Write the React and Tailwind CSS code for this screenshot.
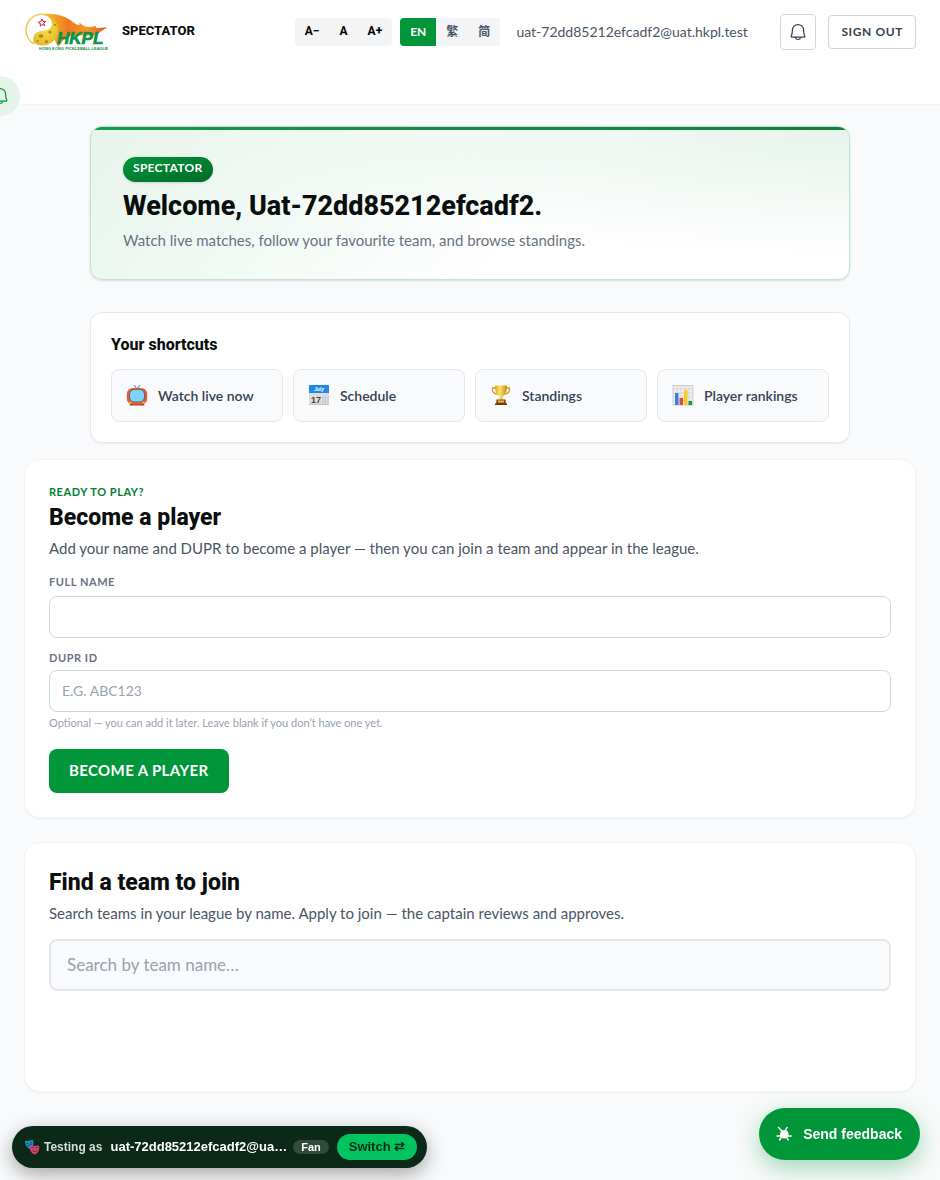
import React, { useState } from "react";
import { PiBell } from "react-icons/pi";

const email = "uat-72dd85212efcadf2@uat.hkpl.test";

const heading = "font-['Roboto',sans-serif] font-extrabold text-[#0a0f0d]";
const card = "rounded-2xl border border-gray-100 bg-white p-6 shadow-xs";
const label = "text-[11px] leading-4 font-bold tracking-wider text-gray-500";
const field = "h-[42px] w-full rounded-lg border border-gray-300 bg-white px-3 pb-0.5 text-sm text-gray-900 placeholder:text-gray-400";

function Logo() {
    return (
        <svg viewBox="-1 0 84 38" className="h-[38px] w-[84px]" role="img" aria-label="HKPL">
            <defs>
                <linearGradient id="flame" x1="0" x2="1">
                    <stop offset="0" stopColor="#f9c828" />
                    <stop offset="0.4" stopColor="#ee7a22" />
                    <stop offset="0.7" stopColor="#f39a2c" />
                    <stop offset="1" stopColor="#e4501e" />
                </linearGradient>
                <radialGradient id="ball" cx="0.6" cy="0.5">
                    <stop offset="0" stopColor="#f3dc45" />
                    <stop offset="1" stopColor="#e3bb2c" />
                </radialGradient>
            </defs>
            <path d="M17 1C32 0 40 3 48 9c2 2 4 3 7 3-1-1-1-2 0-2 3 3 6 4 10 4 3 0 4-1 6-1-1 1 0 2 2 2 3 0 6-1 9 0-4 1-7 5-12 7-8 2-15-1-24 1-6 1-9 6-13 11z" fill="url(#flame)" />
            <circle cx="17.500" cy="17" r="15.500" fill="url(#ball)" />
            <path d="M17 2c6 0 10 4 10 9 0 4-4 6-9 7-5 0-8 2-9 5-1 3-1 5 0 8C4 28 2 23 2 17 2 8 9 2 17 2z" fill="#fff" />
            <path d="M17 1C8 1 1 8 1 17c0 6 3 11 8 14" fill="none" stroke="#edbd3b" strokeWidth="1.200" />
            <path d="M17 6l1 2.500 2.700-.1-2 1.800 1 2.500-2.500-1.200-2 1.800.2-2.700-2.300-1.300 2.700-.5z" fill="#fff" stroke="#c8203c" strokeWidth="1" />
            <g fill="#ad8420">
                <ellipse cx="16" cy="23" rx="2.300" ry="1.700" />
                <circle cx="25" cy="19" r="1.600" />
                <circle cx="21.500" cy="28.500" r="1.600" />
                <circle cx="30" cy="12" r="1.100" />
                <circle cx="12.500" cy="28" r="1.100" />
            </g>
            <text x="32" y="31" fontSize="17" fontWeight="700" fontStyle="italic" fontFamily="Liberation Sans, sans-serif" fill="#0c9444" stroke="#0c9444" strokeWidth="0.700">HKPL</text>
            <text x="14" y="37" fontSize="4" fontWeight="700" fontFamily="Liberation Sans, sans-serif" fill="#0c9444">HONG KONG PICKLEBALL LEAGUE</text>
        </svg>
    );
}

function TvIcon() {
    return (
        <svg viewBox="0 0 22 22" className="h-[22px] w-[22px]" aria-hidden="true">
            <path d="M8 0l3 4 3-4" fill="none" stroke="#7297a8" strokeWidth="1.200" />
            <path d="M4 18h14l.5 2.500h-15z" fill="#b23a1c" />
            <rect x="0.800" y="3" width="20.400" height="16.500" rx="6" fill="#f0592b" />
            <rect x="3" y="4.200" width="16" height="13" rx="5" fill="#4b7180" />
            <rect x="4" y="5" width="14" height="11.500" rx="4.500" fill="#7fd3fa" />
            <circle cx="4.500" cy="17.500" r="0.900" fill="#ffc93d" />
            <circle cx="17.500" cy="17.500" r="0.900" fill="#ffc93d" />
        </svg>
    );
}

function CalendarIcon() {
    return (
        <svg viewBox="0 0 22 22" className="h-[22px] w-[22px]" aria-hidden="true">
            <rect x="1" y="0" width="20" height="20" rx="1" fill="#dedede" />
            <path d="M1 1a1 1 0 0 1 1-1h18a1 1 0 0 1 1 1v7H1z" fill="#1e88e5" />
            <path d="M15 11v8M17.500 11v8M20 11v8M1 19.500h20" stroke="#bdbdbd" strokeWidth="0.800" />
            <text x="11" y="6" textAnchor="middle" fontSize="5" fontWeight="700" fontStyle="italic" fontFamily="Liberation Sans, sans-serif" fill="#fff">July</text>
            <text x="8" y="18" textAnchor="middle" fontSize="9" fontWeight="700" fontFamily="Liberation Sans, sans-serif" fill="#424242">17</text>
        </svg>
    );
}

function TrophyIcon() {
    return (
        <svg viewBox="0 0 22 22" className="h-[22px] w-[22px]" aria-hidden="true">
            <defs>
                <linearGradient id="gold" x1="0" x2="1">
                    <stop offset="0" stopColor="#e0a81d" />
                    <stop offset="0.4" stopColor="#fbe46a" />
                    <stop offset="1" stopColor="#c98a10" />
                </linearGradient>
            </defs>
            <path d="M6 3H2.500C2 7 4 9 8 9M15 3h4.500C20 7 18 9 14 9" fill="none" stroke="#cf9a20" strokeWidth="1.300" />
            <path d="M5 .5h12c0 6-1 9-4.500 11L13 15H9l.5-3.500C6 9.500 5 6.500 5 .5z" fill="url(#gold)" />
            <path d="M6.500 14.500h9L16 19H6z" fill="#8b4a10" />
            <rect x="8" y="15.500" width="6" height="2" fill="#e8b93a" />
            <path d="M5 18.500h12V20H5z" fill="#6d2f0c" />
        </svg>
    );
}

function ChartIcon() {
    return (
        <svg viewBox="0 0 22 22" className="h-[22px] w-[22px]" aria-hidden="true">
            <rect x="1" y="0.500" width="20" height="19.500" fill="#eeeeee" stroke="#bdbdbd" strokeWidth="0.700" />
            <path d="M1 4h20M1 8h20M1 12h20M1 16h20M5 0v20M9 0v20M13 0v20M17 0v20" stroke="#cfcfcf" strokeWidth="0.600" />
            <rect x="3" y="8" width="3.500" height="12" fill="#3f7be0" />
            <rect x="7.500" y="13" width="3.500" height="7" fill="#e8453c" />
            <rect x="12" y="5" width="3.500" height="15" fill="#f6cb2b" />
            <rect x="16.500" y="16" width="3.500" height="4" fill="#1e8e4a" />
        </svg>
    );
}

function MasksIcon() {
    return (
        <svg viewBox="0 0 16 16" className="h-4 w-4 shrink-0" aria-hidden="true">
            <path d="M1 2c3 0 5-.5 8-1 1 4 0 8-3 9C3 9 1 6 1 2z" fill="#1a8fc4" />
            <path d="M2.500 4.500l2-.3M6 4l2-.5M3.500 7c1.500-1 3-1 4-1.500" stroke="#0b3b56" strokeWidth="0.900" fill="none" />
            <path d="M6 6c3 1 6 1 9 .5 1 4-1 8-4 9-4-1-6-5-5-9.500z" fill="#c9476f" />
            <path d="M7.500 8.500l2 .3M11.500 9l2-.3M8.500 11.500c1.500 1.500 3 1.500 4.500 0" stroke="#6b1734" strokeWidth="0.900" fill="none" />
        </svg>
    );
}

function FeedbackIcon() {
    return (
        <svg viewBox="0 0 16 16" className="h-4 w-4" fill="white" stroke="white" strokeWidth="1.500" strokeLinecap="round" aria-hidden="true">
            <circle cx="8.300" cy="8.300" r="4.300" stroke="none" />
            <path d="M7 6 2.500 1.500M8.500 6l2.500-4.500M1 10h14.200M5.500 11 3.500 14M10.500 11l1.700 3" fill="none" />
        </svg>
    );
}

const shortcuts = [
    { Icon: TvIcon, label: "Watch live now", href: "#live" },
    { Icon: CalendarIcon, label: "Schedule", href: "#schedule" },
    { Icon: TrophyIcon, label: "Standings", href: "#standings" },
    { Icon: ChartIcon, label: "Player rankings", href: "#rankings" },
];

function Header() {
    const [lang, setLang] = useState("EN");

    return (
        <header className="h-[105px] border-b border-gray-100 bg-white px-6">
            <div className="flex h-16 items-center">
                <a href="#home" className="flex items-center gap-3.5">
                    <Logo />
                    <span className={`${heading} pb-0.5 text-[13px] leading-4`}>SPECTATOR</span>
                </a>

                {/* Text size */}
                <div className="ml-auto flex h-7 items-center rounded bg-gray-100 pb-0.5 font-['Roboto',sans-serif] text-xs font-bold text-black">
                    <button className="px-2.5">A−</button>
                    <button className="px-2.5">A</button>
                    <button className="px-2.5">A+</button>
                </div>

                {/* Language */}
                <div className="ml-2 flex h-7 overflow-hidden rounded bg-gray-100 text-xs font-bold">
                    {["EN", "繁", "简"].map((l) => (
                        <button
                            key={l}
                            onClick={() => setLang(l)}
                            className={l === lang ? "bg-[#009639] px-2.5 text-white" : "px-2.5 text-gray-600"}
                        >
                            {l}
                        </button>
                    ))}
                </div>

                <span className="ml-4 min-w-60 text-sm text-gray-600">{email}</span>
                <button aria-label="Notifications" className="ml-6 flex h-9 w-9 items-center justify-center rounded border border-gray-300 text-gray-700">
                    <PiBell className="h-5 w-5" />
                </button>
                <button className="ml-3 h-[34px] rounded border border-gray-300 px-3 text-xs font-bold tracking-wider text-gray-700">
                    SIGN OUT
                </button>
            </div>
        </header>
    );
}

function Welcome() {
    return (
        <section className="relative mx-auto max-w-[760px] overflow-hidden rounded-xl border border-[#bfe5cd] bg-[radial-gradient(ellipse_at_top_right,#e6f3eb,transparent_60%),linear-gradient(135deg,#e6f4eb,#ffffff_60%)] px-8 pt-[30px] pb-[27px] shadow-sm">
            <div className="absolute inset-x-0 top-0 h-[3px] bg-gradient-to-r from-[#159a4a] to-[#187a40]"></div>
            <div className="w-fit rounded-full bg-gradient-to-br from-[#009639] to-[#006b29] px-2.5 pt-[3px] pb-1.5 text-xs leading-4 font-bold tracking-wide text-white shadow-sm">
                SPECTATOR
            </div>
            <h1 className={`${heading} mt-1.5 text-[27px] leading-9`}>Welcome, Uat-72dd85212efcadf2.</h1>
            <p className="mt-1 text-[15px] leading-6 text-gray-500">
                Watch live matches, follow your favourite team, and browse standings.
            </p>
        </section>
    );
}

function Shortcuts() {
    return (
        <section className="mx-auto mt-8 max-w-[760px] rounded-xl border border-gray-200 bg-white p-5 shadow-xs">
            <h2 className={`${heading} text-base leading-6`}>Your shortcuts</h2>
            <div className="mt-3 grid grid-cols-4 gap-2.5">
                {shortcuts.map(({ Icon, label, href }) => (
                    <a key={label} href={href} className="flex h-[53px] items-center gap-2.5 rounded-lg border border-gray-200 bg-gray-50 px-3.5 text-sm font-semibold text-gray-700">
                        <Icon />
                        {label}
                    </a>
                ))}
            </div>
        </section>
    );
}

function BecomePlayer() {
    return (
        <form className={card} onSubmit={(e) => e.preventDefault()}>
            <p className="text-[11px] leading-4 font-bold tracking-wider text-[#00802f]">READY TO PLAY?</p>
            <h2 className={`${heading} mt-0.5 text-[23px] leading-8`}>Become a player</h2>
            <p className="mt-1 text-[15px] leading-5 text-gray-600">
                Add your name and DUPR to become a player — then you can join a team and appear in the league.
            </p>

            <label htmlFor="full-name" className={`${label} mt-4 mb-1.5 block`}>FULL NAME</label>
            <input id="full-name" className={field} />

            <label htmlFor="dupr" className={`${label} mt-3 mb-1 block`}>DUPR ID</label>
            <input id="dupr" placeholder="E.G. ABC123" className={field} />
            <p className="mt-[3px] text-[11px] leading-4 text-gray-400">
                Optional — you can add it later. Leave blank if you don’t have one yet.
            </p>

            <button className="mt-[18px] h-11 rounded-lg bg-[#009639] px-5 pb-0.5 text-[15px] font-bold tracking-wide text-white">
                BECOME A PLAYER
            </button>
        </form>
    );
}

function FindTeam() {
    return (
        <section className={`${card} min-h-[250px]`}>
            <h2 className={`${heading} text-[23px] leading-8`}>Find a team to join</h2>
            <p className="mt-1 text-[15px] leading-5 text-gray-600">
                Search teams in your league by name. Apply to join — the captain reviews and approves.
            </p>
            <input
                type="search"
                aria-label="Search by team name"
                placeholder="Search by team name…"
                className="mt-4 h-13 w-full rounded-lg border-2 border-gray-200 bg-gray-50 px-4 pb-0.5 text-[17px] placeholder:text-gray-400"
            />
        </section>
    );
}

export default function App() {
    return (
        <div className="min-h-screen overflow-x-hidden bg-gray-50 font-['Lato','Noto_Sans_CJK_SC',sans-serif]">
            <Header />
            <main className="px-6 pt-[21px] pb-22">
                <Welcome />
                <Shortcuts />
                <div className="mt-4 flex flex-col gap-6">
                    <BecomePlayer />
                    <FindTeam />
                </div>
            </main>

            {/* Floating controls */}
            <button aria-label="Open notifications" className="fixed top-19 -left-5 flex h-10 w-10 items-center justify-center rounded-full bg-[#e5f4eb] text-[#009639]">
                <PiBell className="h-5 w-5" />
            </button>

            <div className="fixed bottom-3 left-3 flex h-[42px] items-center rounded-full bg-[#0b2818] pr-2.5 pl-3 font-['Liberation_Sans',sans-serif] text-[13px] font-bold whitespace-nowrap text-white shadow-[0_6px_20px_rgba(0,0,0,0.35)]">
                <MasksIcon />
                <span className="ml-1 text-xs text-[#d5ded8]">Testing as</span>
                <span className="ml-2" title={email}>{email.slice(0, 23)}…</span>
                <span className="ml-1.5 rounded-full bg-[#304a3b] px-2 text-[11px] leading-[14px]">Fan</span>
                <button className="ml-2 h-[26px] rounded-full bg-[#00c45f] px-3 text-[#0b2818]">Switch ⇄</button>
            </div>

            <button className="fixed right-5 bottom-5 flex h-13 items-center gap-[11px] rounded-full bg-[#009639] pr-[18px] pl-[17px] font-['Liberation_Sans',sans-serif] text-sm font-bold text-white shadow-[0_8px_24px_rgba(0,150,57,0.35)]">
                <FeedbackIcon />
                Send feedback
            </button>
        </div>
    );
}
